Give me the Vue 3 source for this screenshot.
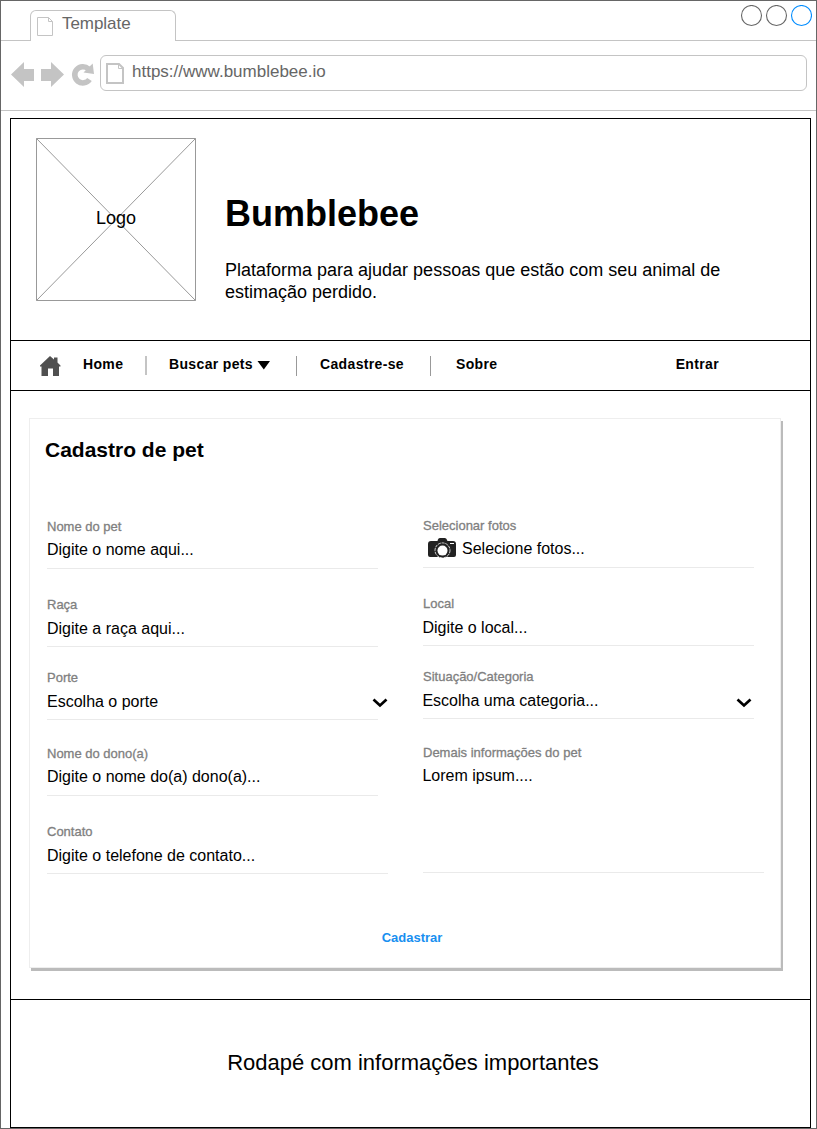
<script setup>
const leftFields = [
  { label: 'Nome do pet', value: 'Digite o nome aqui...' },
  { label: 'Raça', value: 'Digite a raça aqui...', low: true },
  { label: 'Porte', value: 'Escolha o porte', low: true, select: true },
  { label: 'Nome do dono(a)', value: 'Digite o nome do(a) dono(a)...' },
  { label: 'Contato', value: 'Digite o telefone de contato...', low: true, wide: true },
]
const rightFields = [
  { label: 'Selecionar fotos', value: 'Selecione fotos...', camera: true },
  { label: 'Local', value: 'Digite o local...', low: true },
  { label: 'Situação/Categoria', value: 'Escolha uma categoria...', low: true, select: true },
  { label: 'Demais informações do pet', value: 'Lorem ipsum....', wide: true, area: true },
]
const columns = [
  { name: 'left', fields: leftFields },
  { name: 'right', fields: rightFields },
]
</script>

<template>
  <div class="window">
    <div class="tabs">
      <div class="tab">
        <svg class="tab-doc" width="17" height="20" viewBox="0 0 17 20">
          <path d="M.5 .5H11.500L15.500 4.500V18.500H.5ZM11.500 .5V4.500H15.500" fill="none" stroke="#c4c4c4" />
        </svg>
        <span>Template</span>
      </div>
      <svg class="controls" width="72" height="22" viewBox="0 0 72 22">
        <g fill="none" stroke-width="1.1">
          <circle cx="11.5" cy="10.500" r="10" stroke="#666" />
          <circle cx="36.5" cy="10.500" r="10" stroke="#666" />
          <circle cx="61.5" cy="10.500" r="10" stroke="#008cff" />
        </g>
      </svg>
    </div>

    <div class="toolbar">
      <svg class="tools" width="84" height="28" viewBox="0 0 84 28">
        <g fill="#c4c4c4">
          <path d="M0 13.5L13 1V8H23V20H13V26Z" />
          <path d="M53 13.5L40 1V8H30V20H40V26Z" />
        </g>
        <path d="M77.500 8A8.100 8.100 0 1 0 78.500 18.500" fill="none" stroke="#c4c4c4" stroke-width="5.600" />
        <path d="M81.700 2.500L83 13L72.500 11.500Z" fill="#c4c4c4" />
      </svg>
      <div class="address">
        <svg width="18" height="21" viewBox="0 0 18 21">
          <path d="M1 1H13L17 5V20H1Z" fill="none" stroke="#c4c4c4" stroke-width="2" />
          <path d="M12.500 1V5.500H17" fill="none" stroke="#c4c4c4" />
        </svg>
        <span>https://www.bumblebee.io</span>
      </div>
    </div>

    <div class="page">
      <header class="header">
        <div class="logo">
          <svg width="160" height="163" viewBox="0 0 160 163">
            <path d="M.5 .5H159.500V162.500H.5ZM.5 .5L159.500 162.500M159.500 .5L.5 162.500" fill="none" stroke="#999" />
          </svg>
          <span>Logo</span>
        </div>
        <div class="intro">
          <h1>Bumblebee</h1>
          <p>Plataforma para ajudar pessoas que estão com seu animal de estimação perdido.</p>
        </div>
      </header>

      <nav class="nav">
        <svg class="home" width="21" height="21" viewBox="0 0 21 21">
          <path d="M10 0L14 3.500V1.500H17.500V6.500L20.500 9.500V10.500H19V20H13V12.500H8V20H1.500V10.500H0V9.500Z" fill="#505050" />
        </svg>
        <a class="n-home">Home</a>
        <i class="sep thick"></i>
        <a class="n-search">Buscar pets</a>
        <svg class="caret" width="14" height="9" viewBox="0 0 14 9"><path d="M.5 0H13L6.800 8.500Z" /></svg>
        <i class="sep s2"></i>
        <a class="n-join">Cadastre-se</a>
        <i class="sep s3"></i>
        <a class="n-about">Sobre</a>
        <a class="n-login">Entrar</a>
      </nav>

      <main class="main">
        <section class="card">
          <h2>Cadastro de pet</h2>
          <div class="columns">
            <div v-for="col in columns" :key="col.name" class="column" :class="col.name">
              <div
                v-for="f in col.fields"
                :key="f.label"
                class="field"
                :class="{ low: f.low, wide: f.wide, area: f.area }"
              >
                <label>{{ f.label }}</label>
                <div class="value">
                  <svg v-if="f.camera" class="camera" width="28" height="20" viewBox="0 0 28 20">
                    <path
                      d="M3 3H9.500Q10 0 12 0H17Q18.500 0 19.500 3H25Q28 3 28 6V17Q28 19 26 19H2Q0 19 0 17V6Q0 3 3 3Z"
                      fill="#222"
                    />
                    <circle cx="14.500" cy="12.400" r="7.500" fill="#222" stroke="#fff" stroke-width=".8" stroke-dasharray="3 .8" />
                    <circle cx="14.500" cy="12.600" r="5" fill="#fff" />
                    <path d="M22 5.500H26" stroke="#fff" />
                  </svg>
                  <span>{{ f.value }}</span>
                  <svg v-if="f.select" class="chevron" width="16" height="11" viewBox="0 0 16 11">
                    <path d="M1.500 1.500L8 7.500L14.500 1.500" fill="none" stroke="#000" stroke-width="2.700" />
                  </svg>
                </div>
              </div>
            </div>
          </div>
          <button type="button">Cadastrar</button>
        </section>
      </main>

      <footer class="footer">Rodapé com informações importantes</footer>
    </div>
  </div>
</template>

<style>
body {
  margin: 0;
  background: #fff;
}
</style>

<style scoped>
* {
  box-sizing: border-box;
}
.window {
  width: 817px;
  height: 1129px;
  border: 1px solid #666;
  font-family: 'Liberation Sans', Arial, sans-serif;
  color: #000;
  overflow: hidden;
}
svg {
  display: block;
  flex: none;
}
.tabs {
  height: 40px;
  display: flex;
  justify-content: space-between;
  align-items: flex-start;
  border-bottom: 1px solid #c4c4c4;
  padding-left: 29px;
}
.tab {
  width: 146px;
  height: 31px;
  margin-top: 9px;
  border: 1px solid #c4c4c4;
  border-bottom: 0;
  border-radius: 6px 6px 0 0;
  background: #fff;
  display: flex;
  padding-left: 6px;
  font-size: 17px;
  line-height: 20px;
  color: #666;
}
.tab span {
  margin: 3px 0 0 8px;
  letter-spacing: -0.05px;
}
.tab-doc {
  margin-top: 6px;
}
.controls {
  margin: 4px 4px 0 0;
}
.toolbar {
  height: 70px;
  display: flex;
  align-items: flex-start;
  border-bottom: 1px solid #c4c4c4;
  padding: 14px 9px 0 10px;
}
.tools {
  margin: 6px 5px 0 0;
}
.address {
  flex: 1;
  height: 36px;
  border: 1px solid #c4c4c4;
  border-radius: 6px;
  display: flex;
  padding: 7px 0 0 5px;
  font-size: 17px;
  line-height: 20px;
  color: #666;
}
.address span {
  margin: -1px 0 0 8px;
}
.page {
  width: 801px;
  height: 1010px;
  margin: 7px 0 0 9px;
  border: 1px solid #000;
  display: flex;
  flex-direction: column;
}
.header {
  height: 222px;
  border-bottom: 1px solid #000;
  display: flex;
  padding: 19px 0 0 25px;
}
.logo {
  width: 160px;
  height: 163px;
  display: grid;
  place-items: center;
  font-size: 18px;
}
.logo > * {
  grid-area: 1 / 1;
}
.logo span {
  position: relative;
  top: -1px;
}
.intro {
  width: 520px;
  margin-left: 29px;
}
h1 {
  margin: 55px 0 0;
  font-size: 36px;
  line-height: 42px;
}
.intro p {
  margin: 24px 0 0;
  font-size: 18px;
  line-height: 22px;
}
.nav {
  height: 50px;
  border-bottom: 1px solid #000;
  display: flex;
  align-items: flex-start;
  padding: 15px 91px 0 29px;
  font-size: 14px;
  font-weight: bold;
  line-height: 16px;
  letter-spacing: 0.35px;
}
.n-home {
  width: 63px;
  margin-left: 22px;
}
.n-search {
  width: 88px;
  margin-left: 22px;
}
.n-join {
  width: 87px;
  margin-left: 23px;
}
.n-about {
  margin-left: 25px;
}
.n-login {
  margin-left: auto;
}
.nav .thick {
  margin-left: -1px;
}
.caret {
  margin: 5px 0 0;
}
.sep {
  width: 1px;
  height: 20px;
  background: #999;
}
.thick {
  width: 2px;
  height: 19px;
  background: #c4c4c4;
}
.s2 {
  margin-left: 25px;
}
.s3 {
  margin-left: 23px;
}
.main {
  height: 609px;
  border-bottom: 1px solid #000;
  padding: 27px 0 0 18px;
}
.card {
  width: 752px;
  height: 550px;
  border: 1px solid #eee;
  box-shadow: 2px 3px 0 #bbb;
  padding: 18px 15px 0;
  display: flex;
  flex-direction: column;
}
h2 {
  margin: 0;
  font-size: 21px;
  line-height: 26px;
}
.columns {
  display: flex;
  margin-top: 55px;
  padding-left: 2px;
}
.column {
  width: 341px;
  display: grid;
  grid-template-rows: 78px 73px 76px 78px 51px;
}
.right {
  margin: -1px 0 0 35px;
  grid-template-rows: 78px 73px 76px 129px;
}
.field {
  width: 331px;
  height: 51px;
  border-bottom: 1px solid #eaeaea;
}
.wide {
  width: 341px;
}
.area {
  height: 129px;
}
label {
  display: block;
  padding-top: 1px;
  font-size: 13px;
  line-height: 16px;
  color: #808080;
  -webkit-text-stroke: 0.3px #808080;
}
.value {
  display: flex;
  margin-top: 5px;
  font-size: 16px;
  line-height: 20px;
}
.low .value {
  margin-top: 6px;
}
.right .value {
  margin-left: -0.6px;
}
.camera {
  margin: -1px 6px 0 5.600px;
}
.chevron {
  margin: 6px -10px 0 auto;
}
.right .chevron {
  margin: 7px 2px 0 auto;
}
button {
  align-self: center;
  margin: 56px 0 0 14px;
  padding: 0;
  border: 0;
  background: none;
  font: bold 13px/16px 'Liberation Sans', Arial, sans-serif;
  color: #188ff0;
}
.footer {
  padding-top: 50px;
  padding-left: 5px;
  text-align: center;
  font-size: 22px;
  line-height: 26px;
}
</style>
